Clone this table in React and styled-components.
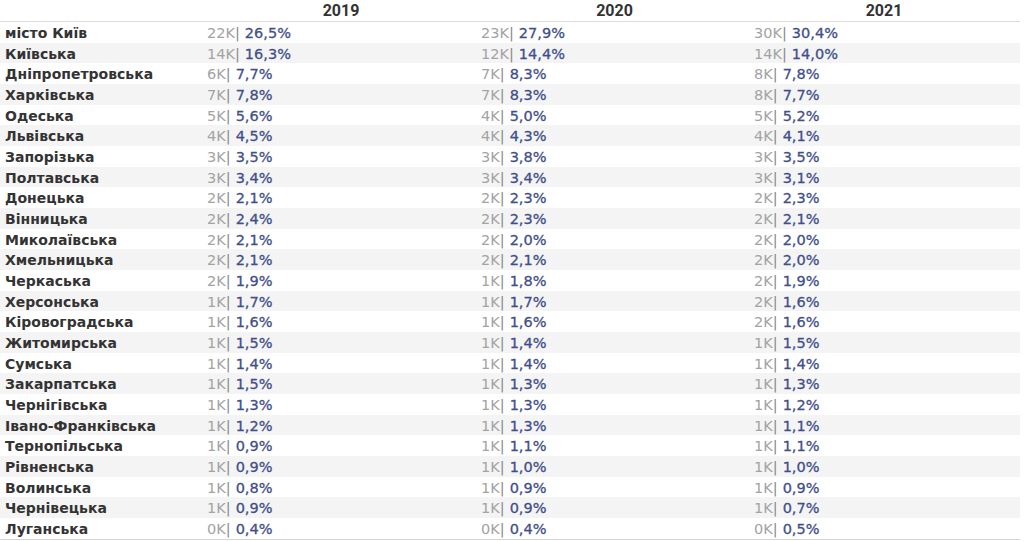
import React from "react";
import styled, { createGlobalStyle } from "styled-components";

const Global = createGlobalStyle`
  html, body { margin: 0; padding: 0; background: #ffffff; }
  body { width: 1024px; height: 541px; overflow: hidden; }
`;

const data = [
  ["місто Київ", ["22K", "26,5%"], ["23K", "27,9%"], ["30K", "30,4%"]],
  ["Київська", ["14K", "16,3%"], ["12K", "14,4%"], ["14K", "14,0%"]],
  ["Дніпропетровська", ["6K", "7,7%"], ["7K", "8,3%"], ["8K", "7,8%"]],
  ["Харківська", ["7K", "7,8%"], ["7K", "8,3%"], ["8K", "7,7%"]],
  ["Одеська", ["5K", "5,6%"], ["4K", "5,0%"], ["5K", "5,2%"]],
  ["Львівська", ["4K", "4,5%"], ["4K", "4,3%"], ["4K", "4,1%"]],
  ["Запорізька", ["3K", "3,5%"], ["3K", "3,8%"], ["3K", "3,5%"]],
  ["Полтавська", ["3K", "3,4%"], ["3K", "3,4%"], ["3K", "3,1%"]],
  ["Донецька", ["2K", "2,1%"], ["2K", "2,3%"], ["2K", "2,3%"]],
  ["Вінницька", ["2K", "2,4%"], ["2K", "2,3%"], ["2K", "2,1%"]],
  ["Миколаївська", ["2K", "2,1%"], ["2K", "2,0%"], ["2K", "2,0%"]],
  ["Хмельницька", ["2K", "2,1%"], ["2K", "2,1%"], ["2K", "2,0%"]],
  ["Черкаська", ["2K", "1,9%"], ["1K", "1,8%"], ["2K", "1,9%"]],
  ["Херсонська", ["1K", "1,7%"], ["1K", "1,7%"], ["2K", "1,6%"]],
  ["Кіровоградська", ["1K", "1,6%"], ["1K", "1,6%"], ["2K", "1,6%"]],
  ["Житомирська", ["1K", "1,5%"], ["1K", "1,4%"], ["1K", "1,5%"]],
  ["Сумська", ["1K", "1,4%"], ["1K", "1,4%"], ["1K", "1,4%"]],
  ["Закарпатська", ["1K", "1,5%"], ["1K", "1,3%"], ["1K", "1,3%"]],
  ["Чернігівська", ["1K", "1,3%"], ["1K", "1,3%"], ["1K", "1,2%"]],
  ["Івано-Франківська", ["1K", "1,2%"], ["1K", "1,3%"], ["1K", "1,1%"]],
  ["Тернопільська", ["1K", "0,9%"], ["1K", "1,1%"], ["1K", "1,1%"]],
  ["Рівненська", ["1K", "0,9%"], ["1K", "1,0%"], ["1K", "1,0%"]],
  ["Волинська", ["1K", "0,8%"], ["1K", "0,9%"], ["1K", "0,9%"]],
  ["Чернівецька", ["1K", "0,9%"], ["1K", "0,9%"], ["1K", "0,7%"]],
  ["Луганська", ["0K", "0,4%"], ["0K", "0,4%"], ["0K", "0,5%"]],
];

const years = ["2019", "2020", "2021"];

const Table = styled.div`
  width: 1020px;
  display: flex;
  flex-direction: column;
  border-bottom: 1px solid #d4d4d4;
`;

const Grid = styled.div`
  display: grid;
  grid-template-columns: 204px 274px 273px 266px;
`;

const HeaderRow = styled(Grid)`
  height: 21px;
  border-bottom: 1px solid #dcdcdc;
  align-items: center;
`;

const Year = styled.div`
  text-align: center;
  font-family: Roboto, "Liberation Sans", sans-serif;
  font-weight: 700;
  font-size: 16px;
  color: #333333;
  line-height: 21px;
`;

const Row = styled(Grid)`
  height: 20.68px;
  box-sizing: border-box;
  padding-top: 1px;
  align-items: center;
  background: ${(p) => (p.$shaded ? "#f4f4f4" : "#ffffff")};
`;

const Label = styled.div`
  font-family: "DejaVu Sans", sans-serif;
  font-weight: 700;
  font-size: 14px;
  color: #333333;
  padding-left: 5px;
  white-space: nowrap;
`;

const Cell = styled.div`
  display: flex;
  align-items: baseline;
  padding-left: 3px;
  white-space: nowrap;
  font-family: "DejaVu Sans", sans-serif;
  font-size: 14.5px;
`;

const Count = styled.span`
  color: #a3a3a3;
`;

const Pipe = styled.span`
  color: #8a8a8a;
  margin-right: 5px;
`;

const Pct = styled.span`
  color: #3f4f8c;
  -webkit-text-stroke: 0.3px #3f4f8c;
`;

export default function App() {
  return (
    <>
      <Global />
      <Table>
        <HeaderRow>
          <div />
          {years.map((y) => (
            <Year key={y}>{y}</Year>
          ))}
        </HeaderRow>
        {data.map(([name, ...vals], i) => (
          <Row key={name} $shaded={i % 2 === 1}>
            <Label>{name}</Label>
            {vals.map(([c, p], j) => (
              <Cell key={j}>
                <Count>{c}</Count>
                <Pipe>|</Pipe>
                <Pct>{p}</Pct>
              </Cell>
            ))}
          </Row>
        ))}
      </Table>
    </>
  );
}
